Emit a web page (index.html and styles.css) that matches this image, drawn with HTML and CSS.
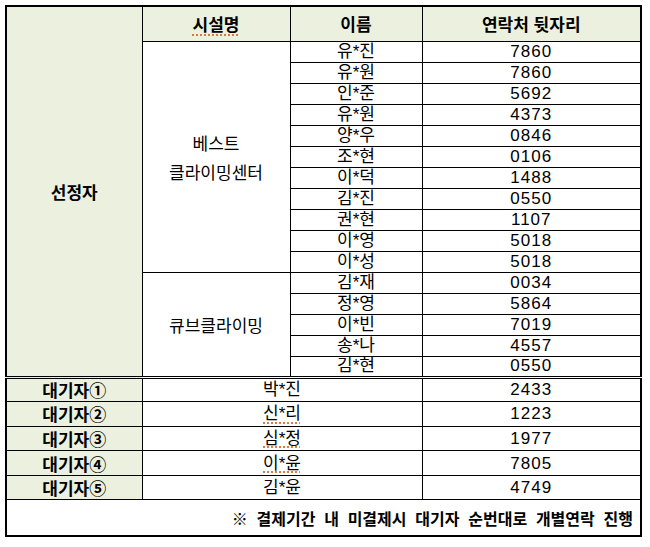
FILE: index.html
```html
<!DOCTYPE html>
<html lang="ko">
<head>
<meta charset="utf-8">
<title>선정자 명단</title>
<link rel="stylesheet" href="styles.css">
</head>
<body>
<table class="sheet">
  <colgroup>
    <col class="c1"><col class="c2"><col class="c3"><col class="c4">
  </colgroup>
  <tr class="head">
    <td rowspan="17" class="lbl sel">선정자</td>
    <th><span class="spell">시설명</span></th>
    <th>이름</th>
    <th>연락처 뒷자리</th>
  </tr>
  <tr class="row"><td rowspan="11" class="fac fac-a">베스트<br>클라이밍센터</td><td>유*진</td><td class="num">7860</td></tr>
  <tr class="row"><td>유*원</td><td class="num">7860</td></tr>
  <tr class="row"><td>인*준</td><td class="num">5692</td></tr>
  <tr class="row"><td>유*원</td><td class="num">4373</td></tr>
  <tr class="row"><td>양*우</td><td class="num">0846</td></tr>
  <tr class="row"><td>조*현</td><td class="num">0106</td></tr>
  <tr class="row"><td>이*덕</td><td class="num">1488</td></tr>
  <tr class="row"><td>김*진</td><td class="num">0550</td></tr>
  <tr class="row"><td>권*현</td><td class="num">1107</td></tr>
  <tr class="row"><td>이*영</td><td class="num">5018</td></tr>
  <tr class="row"><td>이*성</td><td class="num">5018</td></tr>
  <tr class="row"><td rowspan="5" class="fac">큐브클라이밍</td><td>김*재</td><td class="num">0034</td></tr>
  <tr class="row"><td>정*영</td><td class="num">5864</td></tr>
  <tr class="row"><td>이*빈</td><td class="num">7019</td></tr>
  <tr class="row"><td>송*나</td><td class="num">4557</td></tr>
  <tr class="row"><td>김*현</td><td class="num">0550</td></tr>
  <tr class="wait first"><td class="lbl">대기자①</td><td colspan="2">박*진</td><td class="num">2433</td></tr>
  <tr class="wait"><td class="lbl">대기자②</td><td colspan="2"><span class="spell">신*리</span></td><td class="num">1223</td></tr>
  <tr class="wait"><td class="lbl">대기자③</td><td colspan="2"><span class="spell">심*정</span></td><td class="num">1977</td></tr>
  <tr class="wait"><td class="lbl">대기자④</td><td colspan="2"><span class="spell">이*윤</span></td><td class="num">7805</td></tr>
  <tr class="wait"><td class="lbl">대기자⑤</td><td colspan="2">김*윤</td><td class="num">4749</td></tr>
  <tr class="foot"><td colspan="4">※ 결제기간 내 미결제시 대기자 순번대로 개별연락 진행</td></tr>
</table>
</body>
</html>
```

FILE: styles.css
```css
html, body {
  margin: 0;
  padding: 0;
  background: #ffffff;
}

body {
  font-family: "Liberation Sans", "Noto Sans CJK KR", sans-serif;
  font-size: 17px;
  color: #000000;
}

.sheet {
  margin: 5px;
  width: 637px;
  border-collapse: collapse;
  border: 2px solid #000000;
  table-layout: fixed;
}

.c1 { width: 136px; }
.c2 { width: 148px; }
.c3 { width: 132px; }
.c4 { width: auto; }

.sheet td,
.sheet th {
  border: 1px solid #000000;
  padding: 0;
  text-align: center;
  vertical-align: middle;
  line-height: 1;
  white-space: nowrap;
}

.row td {
  padding-bottom: 1px;
}

.head th {
  background: #ebf1de;
  font-weight: 700;
  font-family: "Noto Sans CJK KR", sans-serif;
}

.head { height: 35px; }
.row { height: 21px; }
.wait { height: 24.6px; }
.foot { height: 36px; }

.lbl {
  background: #ebf1de;
  font-weight: 700;
  font-family: "Noto Sans CJK KR", sans-serif;
}

.sheet .fac {
  font-family: "Noto Sans CJK KR", sans-serif;
  padding-bottom: 0;
}

.fac-a {
  line-height: 29px !important;
}

.num {
  letter-spacing: 1px;
}

.wait.first td {
  border-top: 3px double #000000;
}

.foot td {
  text-align: right;
  padding-right: 7px;
  font-family: "Noto Sans CJK KR", sans-serif;
  font-size: 16px;
  font-weight: 700;
  word-spacing: 4.3px;
}

.spell {
  text-decoration: underline dotted #d2691e;
  text-underline-offset: 3px;
}
```
